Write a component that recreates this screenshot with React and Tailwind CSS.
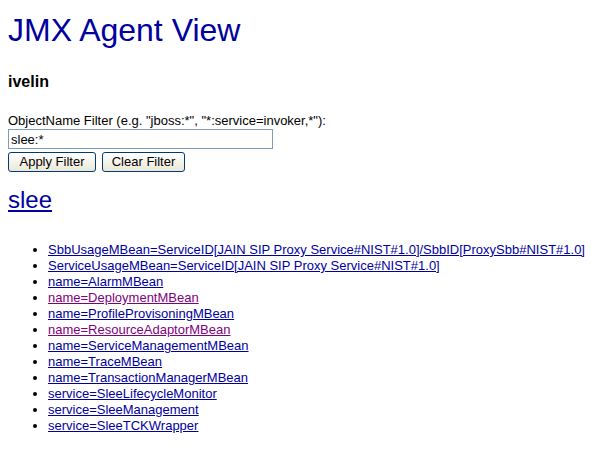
const items = [
  { label: 'SbbUsageMBean=ServiceID[JAIN SIP Proxy Service#NIST#1.0]/SbbID[ProxySbb#NIST#1.0]' },
  { label: 'ServiceUsageMBean=ServiceID[JAIN SIP Proxy Service#NIST#1.0]' },
  { label: 'name=AlarmMBean' },
  { label: 'name=DeploymentMBean', visited: true },
  { label: 'name=ProfileProvisoningMBean' },
  { label: 'name=ResourceAdaptorMBean', visited: true },
  { label: 'name=ServiceManagementMBean' },
  { label: 'name=TraceMBean' },
  { label: 'name=TransactionManagerMBean' },
  { label: 'service=SleeLifecycleMonitor' },
  { label: 'service=SleeManagement' },
  { label: 'service=SleeTCKWrapper' },
];

const XpButton = ({ children, className = '' }) => (
  <button
    className={`h-[20px] border border-[#003c74] rounded-[3px] bg-gradient-to-b from-white to-[#ebe8d6] text-[13px] leading-[18px] text-black ${className}`}
  >
    {children}
  </button>
);

export default function App() {
  return (
    <div className="min-h-[454px] bg-white pl-[8px] pt-[12px] text-black font-['Liberation_Sans',Arial,sans-serif]">
      <h1 className="text-[32px] leading-[37px] text-[#0000a0]">JMX Agent View</h1>

      <h3 className="mt-[23px] text-[16px] leading-[20px] font-bold">ivelin</h3>

      <form className="mt-[21px]" onSubmit={(e) => e.preventDefault()}>
        <div className="text-[13px] leading-[15px]">
          ObjectName Filter (e.g. "jboss:*", "*:service=invoker,*"):
        </div>
        <input
          defaultValue="slee:*"
          className="mt-[1px] block w-[265px] h-[20px] border border-[#7f9db9] px-[2px] text-[13px] outline-none"
        />
        <div className="mt-[3px] flex gap-[6px]">
          <XpButton className="w-[88px]">Apply Filter</XpButton>
          <XpButton className="w-[83px]">Clear Filter</XpButton>
        </div>
      </form>

      <h2 className="mt-[14px] text-[24px] leading-[28px]">
        <a href="#" className="text-[#0000a0] underline">slee</a>
      </h2>

      <ul className="mt-[28px] pl-[40px] list-disc text-[13px] leading-[16px]">
        {items.map((item) => (
          <li key={item.label}>
            <a
              href="#"
              className={`underline ${item.visited ? 'text-[#800080]' : 'text-[#0000a0]'}`}
            >
              {item.label}
            </a>
          </li>
        ))}
      </ul>
    </div>
  );
}
